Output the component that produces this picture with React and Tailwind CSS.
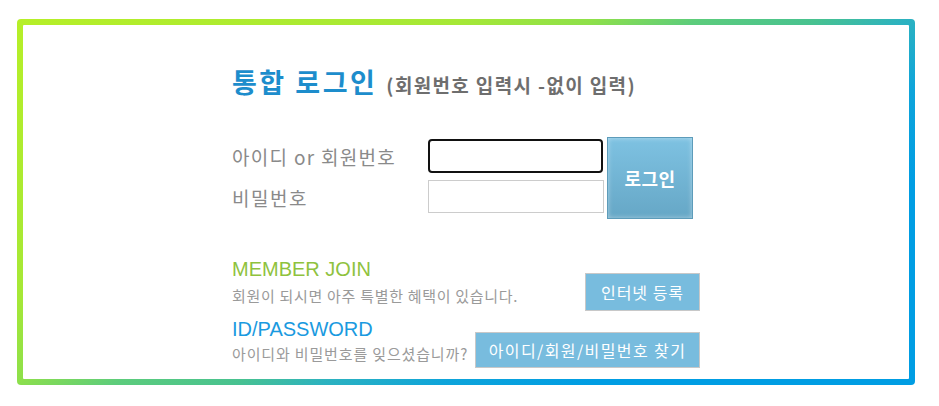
const kr = "font-['Noto_Sans_CJK_KR','Noto_Sans',sans-serif]"
const latin = "font-['Liberation_Sans',Arial,sans-serif]"

const LoginForm = () => (
  <div className="flex items-start mt-[40px]">
    <div className="flex flex-col">
      <div className="flex items-center h-[34px] mt-[2px]">
        <label className={`w-[196px] text-[19px] tracking-[1.3px] text-[#8a8a8a] pt-[2px] ${kr}`}>
          아이디 or 회원번호
        </label>
        <input
          type="text"
          className="w-[175px] h-[34px] border-2 border-[#111] rounded-[4px] bg-white outline-none"
        />
      </div>
      <div className="flex items-center h-[33px] mt-[7px]">
        <label className={`w-[196px] text-[19px] tracking-[1.5px] text-[#8a8a8a] pt-[3px] ${kr}`}>
          비밀번호
        </label>
        <input
          type="password"
          className="w-[176px] h-[33px] border border-[#cccccc] bg-white outline-none"
        />
      </div>
    </div>
    <button className={`ml-[3px] w-[86px] h-[82px] border border-[#5d9cba] bg-[linear-gradient(#7ec2e2,#66a7c6)] shadow-[inset_0_0_5px_rgba(255,255,255,0.45)] text-white text-[18px] tracking-[0.5px] font-bold ${kr}`}>
      로그인
    </button>
  </div>
)

const InfoRow = ({ title, titleColor, desc, descClass, button, btnClass, btnMt }) => (
  <div className="flex items-start justify-between">
    <div>
      <p className={`text-[20px] leading-[24px] ${titleColor} ${latin}`}>{title}</p>
      <p className={`text-[15px] leading-[20px] text-[#9a9a9a] ${descClass} ${kr}`}>{desc}</p>
    </div>
    <button className={`${btnClass} ${btnMt} border border-[#c8c8c8] bg-[#78bcde] text-white text-[16px] ${kr}`}>
      {button}
    </button>
  </div>
)

export default function App() {
  return (
    <div className="w-[939px] h-[406px] bg-white pt-[19px] pl-[17px]">
      <div className="w-[898px] h-[366px] rounded-[4px] p-[6px] bg-[linear-gradient(148deg,#b6ef28_0%,#a6e836_30%,#8ee04a_39%,#5ccc7c_46%,#48c290_54%,#2cb2c0_60%,#0ea4da_68%,#009de3_78%)]">
        <div className="h-full bg-white rounded-[1px] pl-[209px] pt-[42px]">
          <div className="w-[468px]">
            <div className="flex items-baseline h-[30px]">
              <h1 className={`text-[27px] leading-[30px] tracking-[2.5px] font-bold text-[#1d8dcc] ${kr}`}>통합 로그인</h1>
              <span className={`ml-[9px] text-[19px] tracking-[1.35px] font-bold text-[#6e6e6e] ${kr}`}>
                (회원번호 입력시 -없이 입력)
              </span>
            </div>

            <LoginForm />

            <div className="mt-[38px]">
              <InfoRow
                title="MEMBER JOIN"
                titleColor="text-[#8fc23e]"
                desc="회원이 되시면 아주 특별한 혜택이 있습니다."
                descClass="mt-[5px] tracking-[0.7px]"
                button="인터넷 등록"
                btnClass="w-[115px] h-[38px] tracking-[1px]"
                btnMt="mt-[16px]"
              />
              <div className="mt-[6px]">
                <InfoRow
                  title="ID/PASSWORD"
                  titleColor="text-[#1a9ae0]"
                  desc="아이디와 비밀번호를 잊으셨습니까?"
                  descClass="mt-[3px] tracking-[0.85px]"
                  button="아이디/회원/비밀번호 찾기"
                  btnClass="w-[225px] h-[36px] tracking-[1.4px]"
                  btnMt="mt-[15px]"
                />
              </div>
            </div>
          </div>
        </div>
      </div>
    </div>
  )
}
